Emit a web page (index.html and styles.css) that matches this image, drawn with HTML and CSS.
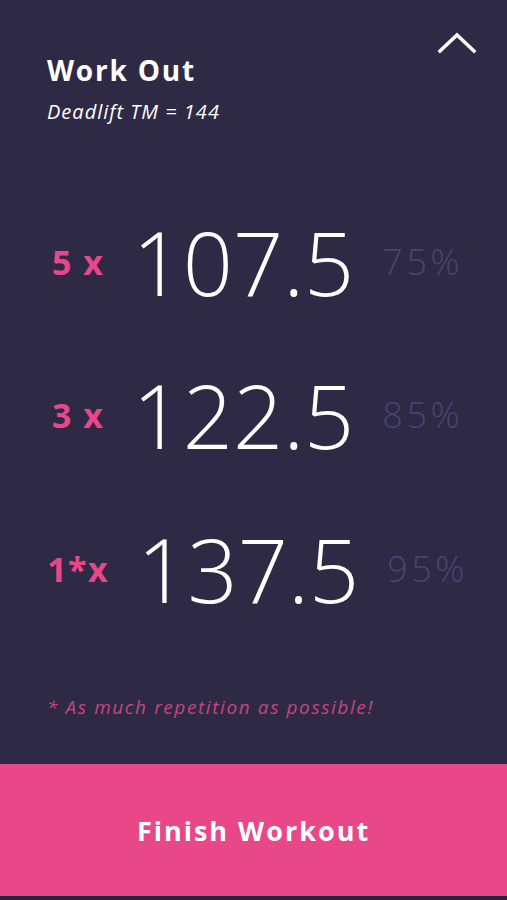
FILE: index.html
```html
<!DOCTYPE html>
<html lang="en">
<head>
<meta charset="utf-8">
<title>Work Out</title>
<link rel="stylesheet" href="styles.css">
</head>
<body>
<div class="screen">
  <header class="header">
    <div class="title-block">
      <h1 class="title">Work Out</h1>
      <p class="subtitle">Deadlift TM = 144</p>
    </div>
    <button class="collapse" aria-label="Collapse">
      <svg width="40" height="24" viewBox="0 0 40 24"><polyline points="3,21 20,5 37,21" fill="none" stroke="#ffffff" stroke-width="3.5" stroke-linecap="square"/></svg>
    </button>
  </header>
  <section class="sets">
    <div class="set">
      <span class="reps">5 x</span>
      <span class="weight">107.5</span>
      <span class="pct">75%</span>
    </div>
    <div class="set">
      <span class="reps">3 x</span>
      <span class="weight">122.5</span>
      <span class="pct">85%</span>
    </div>
    <div class="set">
      <span class="reps">1*x</span>
      <span class="weight">137.5</span>
      <span class="pct">95%</span>
    </div>
  </section>
  <p class="note">* As much repetition as possible!</p>
  <button class="finish">Finish Workout</button>
</div>
</body>
</html>
```
FILE: styles.css
```css
html, body {
  margin: 0;
  padding: 0;
  background: #2e2a45;
}
.screen {
  height: 900px;
  display: flex;
  flex-direction: column;
  font-family: "Open Sans", "Liberation Sans", sans-serif;
  color: #ffffff;
  box-sizing: border-box;
  border-bottom: 4px solid #28243c;
}
.header {
  display: flex;
  justify-content: space-between;
  align-items: flex-start;
  padding: 30px 30px 0 47px;
}
.title-block {
  padding-top: 22px;
}
.title {
  margin: 0;
  font-size: 28px;
  line-height: 36px;
  font-weight: 700;
  letter-spacing: 1.8px;
}
.subtitle {
  margin: 11px 0 0;
  font-size: 20px;
  line-height: 26px;
  font-style: italic;
  letter-spacing: 1px;
}
.collapse {
  background: none;
  border: 0;
  padding: 0;
  width: 40px;
  height: 24px;
}
.collapse svg {
  display: block;
}
.sets {
  margin-top: 60px;
  display: flex;
  flex-direction: column;
}
.set {
  height: 153.5px;
  display: flex;
  justify-content: center;
  align-items: center;
  gap: 28px;
  padding-left: 8px;
}
.reps {
  color: #e8478a;
  font-size: 34px;
  line-height: 1;
  font-weight: 700;
  letter-spacing: 1.5px;
}
.weight {
  font-size: 88px;
  line-height: 1;
  font-weight: 300;
}
.pct {
  color: #4a4470;
  font-size: 36px;
  line-height: 1;
  font-weight: 300;
  letter-spacing: 3.5px;
}
.note {
  margin: 49px 0 0 47px;
  font-size: 19px;
  line-height: 24px;
  font-style: italic;
  letter-spacing: 1.6px;
  color: #c5457f;
}
.finish {
  margin-top: auto;
  height: 132px;
  border: 0;
  background: #e84887;
  color: #ffffff;
  font-family: "Open Sans", "Liberation Sans", sans-serif;
  font-size: 27px;
  font-weight: 700;
  letter-spacing: 2px;
}
```
